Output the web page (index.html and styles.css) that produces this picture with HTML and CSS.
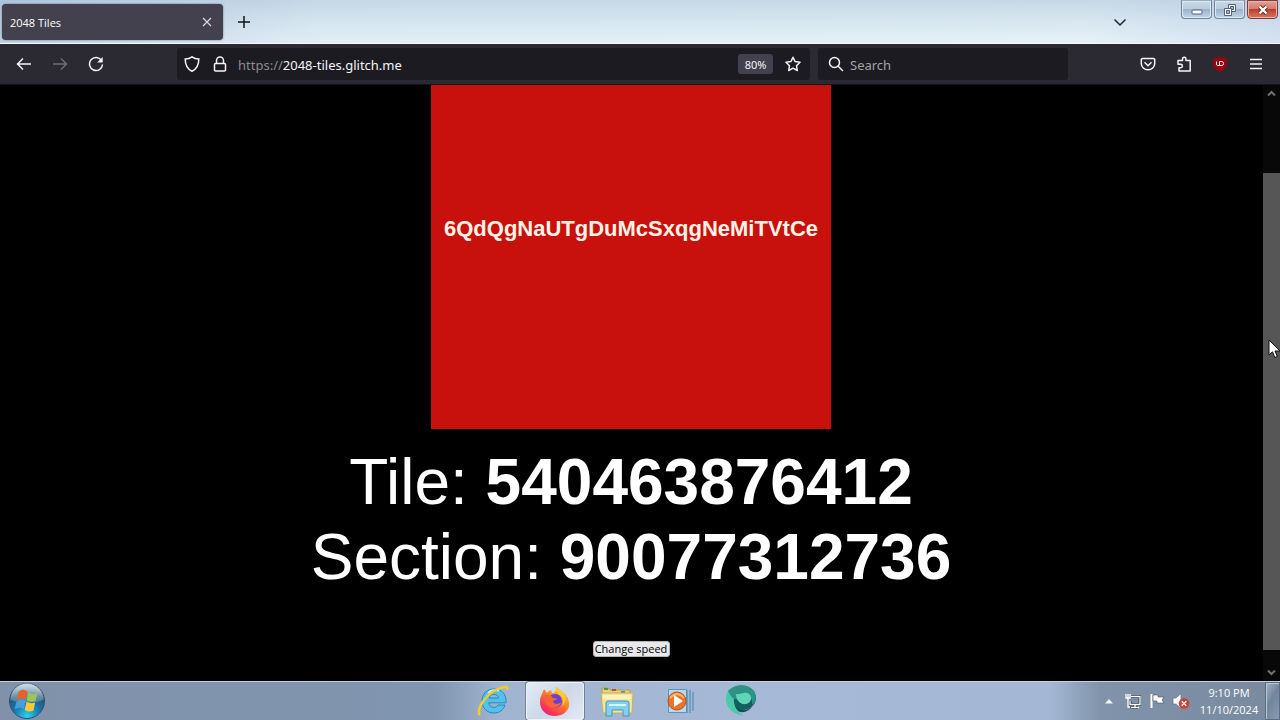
FILE: index.html
```html
<!DOCTYPE html>
<html lang="en">
<head>
<meta charset="utf-8">
<title>2048 Tiles</title>
<link rel="stylesheet" href="styles.css">
</head>
<body>
<header class="titlebar">
  <div class="tab">
    <span class="tab-title">2048 Tiles</span>
    <button class="tab-close" aria-label="Close tab"><svg width="10" height="10" viewBox="0 0 10 10"><path d="M1 1l8 8M9 1L1 9" stroke="#d8d8de" stroke-width="1.2" fill="none"/></svg></button>
  </div>
  <button class="new-tab" aria-label="New tab"><svg width="14" height="14" viewBox="0 0 14 14"><path d="M7 1v12M1 7h12" stroke="#15141a" stroke-width="1.5" fill="none"/></svg></button>
  <button class="all-tabs" aria-label="List all tabs"><svg width="14" height="14" viewBox="0 0 14 14"><path d="M1.500 4.500L7 10l5.500-5.500" stroke="#25242e" stroke-width="1.500" fill="none"/></svg></button>
  <div class="window-controls">
    <button class="win-btn" aria-label="Minimize"><svg width="12" height="12" viewBox="0 0 12 12"><rect x="1" y="6" width="10" height="4" rx="1" fill="#fff" stroke="#50617a"/></svg></button>
    <button class="win-btn" aria-label="Restore"><svg width="14" height="12" viewBox="0 0 14 12"><path d="M5.500 .5h7v7h-7z" fill="#fff" stroke="#50617a"/><path d="M7.500 2.500h3v3h-3z" fill="#9fb4ca" stroke="#50617a"/><path d="M1.500 4.500h7v7h-7z" fill="#fff" stroke="#50617a"/><path d="M3.500 6.500h3v3h-3z" fill="#9fb4ca" stroke="#50617a"/></svg></button>
    <button class="win-btn win-close" aria-label="Close"><svg width="12" height="10" viewBox="0 0 12 10"><path d="M2.500 1.500l7 7M9.500 1.500l-7 7" stroke="#6b2a28" stroke-width="4"/><path d="M2.500 1.500l7 7M9.500 1.500l-7 7" stroke="#fff" stroke-width="2.400"/></svg></button>
  </div>
</header>

<nav class="toolbar">
  <div class="nav-buttons">
    <button class="tool" aria-label="Back"><svg width="16" height="16" viewBox="0 0 16 16"><path d="M15 8H1.500M7 2.500L1.500 8 7 13.500" class="stroke"/></svg></button>
    <button class="tool dim" aria-label="Forward"><svg width="16" height="16" viewBox="0 0 16 16"><path d="M1 8h13.500M9 2.500L14.500 8 9 13.500" class="stroke"/></svg></button>
    <button class="tool" aria-label="Reload"><svg width="16" height="16" viewBox="0 0 16 16"><path d="M13.500 4.500A6.500 6.500 0 1 0 14.500 8.500" class="stroke"/><path d="M14.700 1v5.500H9.200z" fill="currentColor"/></svg></button>
  </div>
  <div class="urlbar">
    <button class="field-icon" aria-label="Tracking protection"><svg width="16" height="16" viewBox="0 0 16 16"><path d="M8 .8C6 2.300 3.500 2.900 1.200 3c0 5.500 1.300 9.700 6.800 12.200C13.500 12.700 14.800 8.500 14.800 3 12.500 2.900 10 2.300 8 .8z" class="stroke"/></svg></button>
    <button class="field-icon lock" aria-label="Site information"><svg width="14" height="16" viewBox="0 0 14 16"><rect x="1.500" y="7.500" width="11" height="7.500" rx="1" class="stroke"/><path d="M3.500 7.500V4.500a3.500 3.500 0 0 1 7 0v3" class="stroke"/></svg></button>
    <label class="scheme" for="url">https://</label>
    <input class="url" id="url" type="text" value="2048-tiles.glitch.me">
    <button class="zoom">80%</button>
    <button class="field-icon" aria-label="Bookmark this page"><svg width="16" height="16" viewBox="0 0 16 16"><path d="M8 1.200l2.100 4.400 4.900.7-3.500 3.400.8 4.800L8 12.200l-4.300 2.300.8-4.800L1 6.300l4.900-.7z" class="stroke" stroke-linejoin="round"/></svg></button>
  </div>
  <div class="searchbar">
    <label class="search-icon" for="search" aria-label="Search"><svg width="16" height="16" viewBox="0 0 16 16"><circle cx="6.500" cy="6.500" r="5" class="stroke"/><path d="M10.200 10.200L15 15" class="stroke"/></svg></label>
    <input class="search" id="search" type="text" placeholder="Search">
  </div>
  <div class="extensions">
    <button class="tool" aria-label="Save to Pocket"><svg width="16" height="16" viewBox="0 0 16 16"><path d="M2.500 2.500h11a1.200 1.200 0 0 1 1.200 1.200V7.500a6.700 6.300 0 0 1-13.400 0V3.700a1.200 1.200 0 0 1 1.200-1.200z" class="stroke"/><path d="M4.500 6.300L8 9.700l3.500-3.400" class="stroke"/></svg></button>
    <button class="tool" aria-label="Extensions"><svg width="16" height="16" viewBox="0 0 16 16"><path d="M6.500 4.500V3a1.700 1.700 0 0 1 3.400 0v1.500h4.300V15H3v-3.300h1.700a1.700 1.700 0 0 0 0-3.400H2V4.500z" class="stroke" stroke-linejoin="round"/></svg></button>
    <button class="tool" aria-label="uBlock Origin"><svg width="16" height="16" viewBox="0 0 16 16"><path d="M8 0c2 1.500 4.500 2 7 2.200v5.300c0 4-3 7-7 8.500-4-1.500-7-4.500-7-8.500V2.200C3.500 2 6 1.500 8 0z" fill="#8e0713"/><path d="M4.500 5.500v2.600q0 1.400 1.400 1.400h1.600v-4M7.500 5.500h2.300q1.700 0 1.700 2t-1.700 2H7.500" stroke="#f7e4e4" fill="none"/></svg></button>
    <button class="tool" aria-label="Menu"><svg width="16" height="16" viewBox="0 0 16 16"><path d="M2 3.500h12M2 8h12M2 12.500h12" class="stroke"/></svg></button>
  </div>
</nav>

<div class="viewport">
  <main class="page">
    <div class="tile">6QdQgNaUTgDuMcSxqgNeMiTVtCe</div>
    <div class="scores">
      <div>Tile: <b>540463876412</b></div>
      <div>Section: <b>90077312736</b></div>
    </div>
    <button class="speed">Change speed</button>
  </main>
  <div class="scrollbar">
    <svg width="17" height="17" viewBox="0 0 17 17"><path d="M5 10.500L8.500 7l3.500 3.500" stroke="#707070" stroke-width="2" fill="none"/></svg>
    <div class="track"><div class="thumb"></div></div>
    <svg width="17" height="17" viewBox="0 0 17 17"><path d="M5 6.500L8.500 10 12 6.500" stroke="#707070" stroke-width="2" fill="none"/></svg>
    <svg class="cursor" width="13" height="20" viewBox="0 0 13 20"><path d="M1 1v15l3.500-3.200 2.300 5.700 2.500-1-2.300-5.500H12z" fill="#fff" stroke="#111"/></svg>
  </div>
</div>

<footer class="taskbar">
  <button class="start" aria-label="Start"><svg width="38" height="38" viewBox="0 0 38 38">
    <defs>
      <radialGradient id="orb" cx=".5" cy=".95" r=".85"><stop offset="0" stop-color="#2bd4f5"/><stop offset=".45" stop-color="#1479b0"/><stop offset=".8" stop-color="#265679"/><stop offset="1" stop-color="#6f8da3"/></radialGradient>
      <linearGradient id="gloss" x1="0" y1="0" x2="0" y2="1"><stop offset="0" stop-color="#dbe8ee" stop-opacity=".9"/><stop offset="1" stop-color="#8eb0bb" stop-opacity=".35"/></linearGradient>
    </defs>
    <circle cx="19" cy="19" r="17.500" fill="url(#orb)" stroke="#31506d"/>
    <path d="M2.500 18a16.500 16.500 0 0 1 33 0Q19 24 2.500 18z" fill="url(#gloss)"/>
    <path d="M10.500 10q4-4 9-.5l-1.600 8q-4-2.500-9.200.8z" fill="#e5632b"/>
    <path d="M20.500 10.500q4 2.500 9 .5l-2 8q-4.500 1.800-8.700-.8z" fill="#99c756"/>
    <path d="M8.400 19.500q5-3 9.100-.7l-1.600 8q-4-2.500-9.200.5z" fill="#4a9ddd"/>
    <path d="M18.500 19.700q4.500 2.500 8.700.8l-1.800 8.200q-4.500 2-8.700-.8z" fill="#fbc936"/>
  </svg></button>
  <div class="apps">
    <button class="app" aria-label="Internet Explorer"><svg width="34" height="34" viewBox="0 0 34 34">
      <path d="M18 5c-7 0-12 5-12 12s5 12 12 12c5.500 0 9.500-3 11-8h-7c-1 1.700-2.300 2.400-4.200 2.400-2.800 0-4.800-1.800-5-4.600H30C30.700 10.500 26 5 18 5zm-5 9c.6-2.300 2.300-3.600 4.800-3.600s4.300 1.300 4.700 3.600z" fill="#52c2ec" stroke="#2587c2"/>
      <path d="M12 9q4-4.500 11-2" stroke="#c5f1fb" stroke-width="1.500" fill="none"/>
      <path d="M4 31C-1 27 10 7 28 3c3-.6 4 .8 3 3" stroke="#f2cc2d" stroke-width="2.500" fill="none"/>
    </svg></button>
    <button class="app active" aria-label="Firefox"><svg width="32" height="32" viewBox="0 0 32 32">
      <defs><linearGradient id="fox" x1=".9" y1="0" x2=".2" y2="1"><stop offset="0" stop-color="#ffdc3e"/><stop offset=".45" stop-color="#ff8128"/><stop offset=".8" stop-color="#fb3657"/><stop offset="1" stop-color="#dc218a"/></linearGradient></defs>
      <path d="M3 9l2-5 3 4q1-2 4-3l1 3c3 0 4-1 4-6 4 2 5 4 6 7l2-1c4 4 6 9 5 13-1 6-7 10-14 10C7 31 1 25 1 17q0-5 2-8z" fill="url(#fox)"/>
      <circle cx="16" cy="16" r="7" fill="#6841cf"/>
      <path d="M6 11c3-2 6-1 8 2l4 .5c0 1.500-3 1.500-4 3 1 3 5 3 8 1-1 4-5 6-9 5-5-1-8-6-7-11.500z" fill="#f8633a"/>
      <path d="M17 2c-1 5 2 6 5 9 2 2 3 6 1 10 4-3 5-9 1-14-2-2-5-3-7-5z" fill="#ffc936"/>
    </svg></button>
    <button class="app" aria-label="Windows Explorer"><svg width="36" height="34" viewBox="0 0 36 34">
      <path d="M3 4h6l2 2h20v6H3z" fill="#ead273" stroke="#b79c49"/>
      <path d="M5 5h4" stroke="#4b9c4a" stroke-width="2"/><path d="M13 6h4" stroke="#bc4b32" stroke-width="2"/><path d="M22 8h4" stroke="#4597bd" stroke-width="2"/>
      <path d="M2 9h32l-1 20H4z" fill="#f5e59b" stroke="#c9af5d"/>
      <path d="M4 11h28v4H4z" fill="#fff4bd"/>
      <path d="M7 32V19q0-2 2-2h19q2 0 2 2v13h-6v-6H13v6z" fill="#83cff0" stroke="#4295c3"/>
      <path d="M10 21h17" stroke="#d5f4fc" stroke-width="2"/>
    </svg></button>
    <button class="app" aria-label="Windows Media Player"><svg width="32" height="32" viewBox="0 0 32 32">
      <path d="M5.500 4.500h18v23h-18z" fill="#b8d8ef" stroke="#6192bb"/>
      <path d="M24 5v23M27 5v23M30 7v19" stroke="#4a8fb8" stroke-width="1.200"/>
      <circle cx="14" cy="16" r="9" fill="#ec7428" stroke="#c74d17"/>
      <path d="M7 13q7-8 14 0" stroke="#ffb46c" stroke-width="2" fill="none"/>
      <path d="M11 10l9 6-9 6z" fill="#fff"/>
    </svg></button>
    <button class="app" aria-label="Browser"><svg width="34" height="34" viewBox="0 0 34 34">
      <ellipse cx="18" cy="14" rx="14" ry="12" fill="#165f60"/>
      <path d="M5 5C-1 14 2 24 11 29q4 2 9 3C11 26 8 19 11 11z" fill="#4bc9a8"/>
      <path d="M4 7C11-1 24-1 30 7c3 5 2 11-2 14 1-6-2-10-7-10-6 0-5 5-10 4-4-1-5-5-7-8z" fill="#2c9385"/>
      <path d="M12 10c6 1 8-3 13 0 4 3 2 9-3 10-6 1-10-4-10-10z" fill="#62d5b7"/>
      <path d="M11 22c6 6 13 5 18-1-3 6-10 9-15 6z" fill="#134f53"/>
    </svg></button>
  </div>
  <div class="tray">
    <button class="tray-btn arrow" aria-label="Show hidden icons"><svg width="8" height="5" viewBox="0 0 8 5"><path d="M0 4.500L4 0l4 4.500z" fill="#f4f8fb"/></svg></button>
    <button class="tray-btn" aria-label="Network"><svg width="16" height="16" viewBox="0 0 16 16"><path d="M6 3.500h9v8H5V8M10 11.500V14M5.500 14.500H13" stroke="#303d4b" stroke-width="3" fill="none"/><path d="M6 3.500h9v8H5V8M10 11.500V14M6 14.500h8" stroke="#fff" stroke-width="1.300" fill="none"/><path d="M1 1v4h4V1M3 1v13h2" stroke="#fff" stroke-width="1.300" fill="none"/></svg></button>
    <button class="tray-btn" aria-label="Action Center"><svg width="16" height="16" viewBox="0 0 16 16"><path d="M2.500 1v14" stroke="#fff" stroke-width="2"/><path d="M4 2h5v2h6l-2 3 2 3H8V8H4z" fill="#fff" stroke="#44515f" stroke-width=".6"/></svg></button>
    <button class="tray-btn" aria-label="Volume muted"><svg width="18" height="16" viewBox="0 0 18 16"><path d="M1 5h3l5-4.500v15L4 11H1z" fill="#fff" stroke="#647184" stroke-width=".7"/><circle cx="12" cy="10.500" r="5.300" fill="#d43c2d"/><path d="M9.700 8.200l4.600 4.600M14.300 8.200l-4.600 4.600" stroke="#fff" stroke-width="1.500"/></svg></button>
    <button class="clock"><span>9:10 PM</span><span>11/10/2024</span></button>
    <button class="show-desktop" aria-label="Show desktop"></button>
  </div>
</footer>
</body>
</html>
```

FILE: styles.css
```css
* {
  box-sizing: border-box;
}

body {
  margin: 0;
  height: 100vh;
  display: flex;
  flex-direction: column;
  overflow: hidden;
  background: #000;
  color: #fff;
  font-family: "Noto Sans", "Open Sans", sans-serif;
}

button,
input {
  margin: 0;
  padding: 0;
  border: 0;
  background: none;
  color: inherit;
  font: inherit;
}

button {
  display: flex;
  align-items: center;
  justify-content: center;
}

svg {
  flex: none;
  display: block;
}

.stroke {
  fill: none;
  stroke: currentColor;
  stroke-width: 1.5;
}

/* Title bar */
.titlebar {
  display: flex;
  align-items: flex-start;
  height: 44px;
  flex: none;
  padding: 4px 2px 0;
  background:
    linear-gradient(to right, rgba(150, 178, 212, 0.5), rgba(190, 208, 225, 0.1) 25%, rgba(190, 210, 225, 0) 85%, rgba(175, 190, 225, 0.3)),
    linear-gradient(#c6d8e5, #d8e7f0 50%, #e7f1f8);
  border-bottom: 1px solid #f4f7fb;
}

.tab {
  width: 221px;
  height: 36px;
  display: flex;
  align-items: center;
  justify-content: space-between;
  padding: 0 11px 0 8px;
  border-radius: 4px;
  background: #42414d;
  box-shadow: 0 0 2px #5c6674;
}

.tab-title {
  font-family: "Open Sans", sans-serif;
  font-size: 11px;
}

.new-tab {
  width: 42px;
  height: 36px;
}

.all-tabs {
  width: 30px;
  height: 36px;
  margin-left: auto;
  margin-right: 46px;
}

.window-controls {
  display: flex;
  gap: 2px;
  margin-top: -4px;
}

.win-btn {
  width: 31px;
  height: 19px;
  border: 1px solid #71839a;
  border-top-color: #9badbf;
  border-radius: 0 0 4px 4px;
  background: linear-gradient(#c9d9e7, #b9cbdd 48%, #9db3ca 50%, #c0d5e5);
  box-shadow: inset 0 0 0 1px #dce8f2;
}

.win-close {
  border-color: #7c3d42;
  background: linear-gradient(#e2a197, #d47868 48%, #bb3f2b 50%, #d9795f);
  box-shadow: inset 0 0 0 1px #ecb2a7;
}

/* Navigation toolbar */
.toolbar {
  display: flex;
  align-items: center;
  height: 41px;
  flex: none;
  padding: 0 6px;
  background: #2b2a33;
  border-bottom: 1px solid #141318;
  color: #f4f4f8;
}

.nav-buttons {
  display: flex;
  flex: none;
  width: 171px;
}

.tool {
  width: 36px;
  height: 32px;
}

.dim {
  color: #6d6c75;
}

.urlbar,
.searchbar {
  height: 32px;
  display: flex;
  align-items: center;
  background: #1c1b22;
  border-radius: 3px;
  font-size: 13px;
}

.urlbar {
  flex: 1;
  padding: 0 9px 0 7px;
}

.field-icon {
  width: 16px;
  height: 24px;
}

.lock {
  margin: 0 10px 0 12px;
}

.scheme,
.url,
.search {
  padding-top: 2px;
}

.scheme {
  color: #8b8a92;
}

.url {
  flex: 1;
  min-width: 0;
}

.zoom {
  width: 35px;
  height: 20px;
  margin-right: 12px;
  border-radius: 3px;
  background: #42414d;
  font-size: 11px;
}

.searchbar {
  width: 250px;
  margin: 0 62px 0 8px;
  padding: 0 10px;
  gap: 6px;
}

.search {
  flex: 1;
  min-width: 0;
}

.search::placeholder {
  color: #a3a2a9;
  opacity: 1;
}

.extensions {
  display: flex;
}

/* Page */
.viewport {
  flex: 1;
  min-height: 0;
  display: flex;
}

.page {
  flex: 1;
  display: flex;
  flex-direction: column;
  align-items: center;
  padding-right: 1px;
  font-family: "Liberation Sans", Arial, sans-serif;
}

.tile {
  width: 400px;
  height: 344px;
  flex: none;
  display: flex;
  align-items: center;
  justify-content: center;
  padding-bottom: 56px;
  background: #c8100c;
  color: #fff3e6;
  font-size: 22px;
  font-weight: bold;
}

.scores {
  margin: 16px 0 46px;
  font-size: 64px;
  line-height: 75px;
  text-align: center;
}

.speed {
  width: 77px;
  height: 16px;
  border: 1px solid #b5b5b5;
  border-radius: 3px;
  background: #e9e9ed;
  color: #000;
  font-family: "Open Sans", sans-serif;
  font-size: 11px;
  line-height: 14px;
  white-space: nowrap;
}

.scrollbar {
  position: relative;
  width: 17px;
  display: flex;
  flex-direction: column;
  background: #080808;
}

.track {
  flex: 1;
  padding: 71px 0 14px;
}

.thumb {
  height: 100%;
  background: #565656;
}

.cursor {
  position: absolute;
  top: 254px;
  left: 5px;
}

/* Taskbar */
.taskbar {
  display: flex;
  align-items: center;
  height: 39px;
  flex: none;
  border-top: 1px solid #c5d2df;
  background: linear-gradient(to right, #8092aa, #8095af 34%, #a0b4cf 39%, #a6bad8 60%, #a4b8d5 82%, #8093aa 86%, #798a9f);
}

.start {
  width: 54px;
}

.apps {
  display: flex;
  margin-left: 410px;
}

.app {
  width: 58px;
  height: 38px;
  margin-right: 4px;
}

.active {
  border: 1px solid #edf3fa;
  border-radius: 3px;
  background: linear-gradient(135deg, #e4ebf4, #ccd7e8 50%, #e1e9f4);
  box-shadow: 0 0 0 1px #738296;
}

.tray {
  display: flex;
  align-items: center;
  margin-left: auto;
}

.tray-btn {
  width: 24px;
  height: 24px;
}

.clock {
  width: 72px;
  flex-direction: column;
  font-family: "Open Sans", sans-serif;
  font-size: 11px;
  line-height: 17px;
}

.show-desktop {
  width: 15px;
  height: 38px;
  border: 1px solid #596d83;
  background: linear-gradient(120deg, #a4b4c5, #71859b 45%, #8699af);
  box-shadow: inset 1px 1px #b8c5d2;
}
```
